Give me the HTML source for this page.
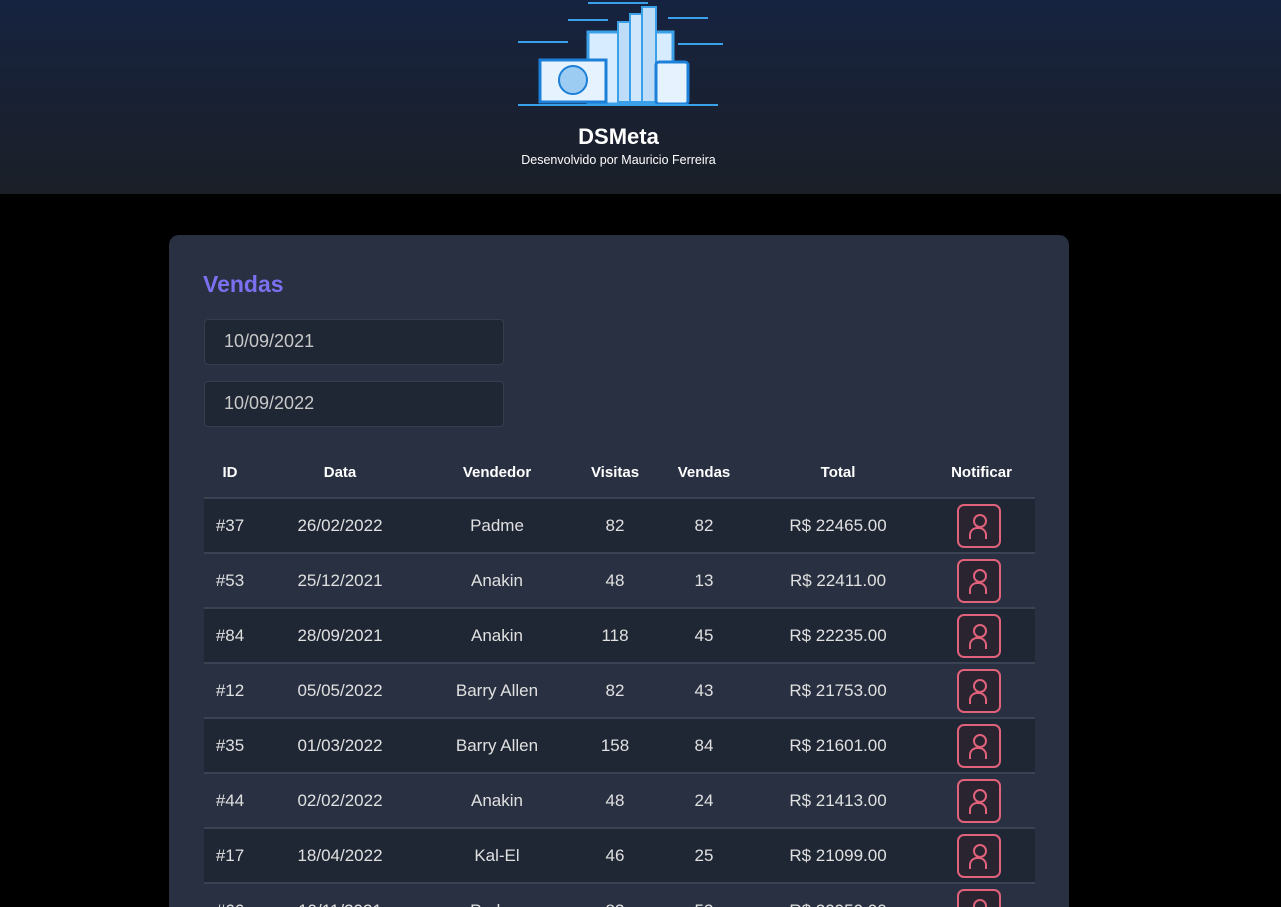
<!DOCTYPE html>
<html style="width:1281px;height:907px;overflow:hidden"><head><meta charset="utf-8"><style>
*{margin:0;padding:0;box-sizing:border-box}
body{width:1281px;height:907px;overflow:hidden;background:#000;font-family:"Liberation Sans",sans-serif;color:#e0e0e0;position:relative}
header{height:194px;background:linear-gradient(#162340,#1b1f27);position:relative;text-align:center}
header h1{position:absolute;top:124px;left:0;width:1237px;font-size:22px;color:#fff;font-weight:bold}
header p{position:absolute;top:153px;left:0;width:1237px;font-size:12.5px;color:#fff}
.card{position:absolute;left:169px;top:235px;width:900px;height:672px;background:#283041;border-radius:10px 10px 0 0;overflow:hidden}
.title{position:absolute;left:34px;top:36px;font-size:23px;font-weight:bold;color:#7a70f0}
.inp{position:absolute;left:35px;width:300px;height:46px;background:#1f2634;border:1px solid #353d4e;border-radius:4px;color:#c8c8c8;font-size:18px;padding:11px 19px}
table{position:absolute;left:35px;top:213px;width:831px;border-collapse:collapse}
th{height:50px;font-size:15px;font-weight:bold;color:#fff;text-align:center}
td{height:55px;text-align:center;font-size:17px;color:#e0e0e0;border-top:2px solid #3a4253}
tr.d td{background:#1f2634}
.b{display:inline-block;width:44px;height:44px;border:2px solid #e0627b;border-radius:7px;background:#2a2330;vertical-align:middle;position:relative;font-size:0}
.b::before{content:"";position:absolute;left:14px;top:8px;width:10px;height:10px;border:2px solid #e0627b;border-radius:50%}
.b::after{content:"";position:absolute;left:10px;top:21px;width:14px;height:10px;border:2px solid #e0627b;border-bottom:none;border-radius:8px 8px 0 0}
</style></head><body>
<header>
<svg width="220" height="115" style="position:absolute;left:508px;top:0" viewBox="0 0 220 115">
<g stroke="#3aa0e8" stroke-width="2" fill="none"><line x1="10" y1="42" x2="60" y2="42"/><line x1="60" y1="20" x2="100" y2="20"/><line x1="170" y1="44" x2="215" y2="44"/><line x1="160" y1="18" x2="200" y2="18"/><line x1="80" y1="3" x2="140" y2="3"/></g>
<rect x="80" y="32" width="85" height="72" fill="#d8ecff" stroke="#3aa0e8" stroke-width="3"/>
<rect x="110" y="22" width="14" height="80" fill="#bcdcf8" stroke="#3aa0e8" stroke-width="2"/>
<rect x="122" y="14" width="14" height="88" fill="#cfe6fb" stroke="#3aa0e8" stroke-width="2"/>
<rect x="134" y="7" width="14" height="95" fill="#bcdcf8" stroke="#3aa0e8" stroke-width="2"/>
<rect x="32" y="60" width="66" height="42" fill="#e6f3ff" stroke="#1c80d8" stroke-width="3"/>
<circle cx="65" cy="80" r="14" fill="#9cccf2" stroke="#1c80d8" stroke-width="2"/>
<rect x="148" y="62" width="32" height="42" rx="3" fill="#e6f3ff" stroke="#1c80d8" stroke-width="3"/>
<line x1="10" y1="105" x2="210" y2="105" stroke="#3aa0e8" stroke-width="2"/>
</svg>
<h1>DSMeta</h1><p>Desenvolvido por Mauricio Ferreira</p>
</header>
<div class="card">
<div class="title">Vendas</div>
<div class="inp" style="top:84px">10/09/2021</div>
<div class="inp" style="top:146px">10/09/2022</div>
<table>
<colgroup><col style="width:52px"><col style="width:168px"><col style="width:146px"><col style="width:90px"><col style="width:88px"><col style="width:180px"><col></colgroup>
<tr><th>ID</th><th>Data</th><th>Vendedor</th><th>Visitas</th><th>Vendas</th><th>Total</th><th>Notificar</th></tr>
<tr class="d"><td>#37</td><td>26/02/2022</td><td>Padme</td><td>82</td><td>82</td><td>R$ 22465.00</td><td><span class="b" style="left:-3px"></span></td></tr>
<tr><td>#53</td><td>25/12/2021</td><td>Anakin</td><td>48</td><td>13</td><td>R$ 22411.00</td><td><span class="b" style="left:-3px"></span></td></tr>
<tr class="d"><td>#84</td><td>28/09/2021</td><td>Anakin</td><td>118</td><td>45</td><td>R$ 22235.00</td><td><span class="b" style="left:-3px"></span></td></tr>
<tr><td>#12</td><td>05/05/2022</td><td>Barry Allen</td><td>82</td><td>43</td><td>R$ 21753.00</td><td><span class="b" style="left:-3px"></span></td></tr>
<tr class="d"><td>#35</td><td>01/03/2022</td><td>Barry Allen</td><td>158</td><td>84</td><td>R$ 21601.00</td><td><span class="b" style="left:-3px"></span></td></tr>
<tr><td>#44</td><td>02/02/2022</td><td>Anakin</td><td>48</td><td>24</td><td>R$ 21413.00</td><td><span class="b" style="left:-3px"></span></td></tr>
<tr class="d"><td>#17</td><td>18/04/2022</td><td>Kal-El</td><td>46</td><td>25</td><td>R$ 21099.00</td><td><span class="b" style="left:-3px"></span></td></tr>
<tr><td>#66</td><td>10/11/2021</td><td>Padme</td><td>83</td><td>53</td><td>R$ 20950.00</td><td><span class="b" style="left:-3px"></span></td></tr>
</table>
</div>
</body></html>
